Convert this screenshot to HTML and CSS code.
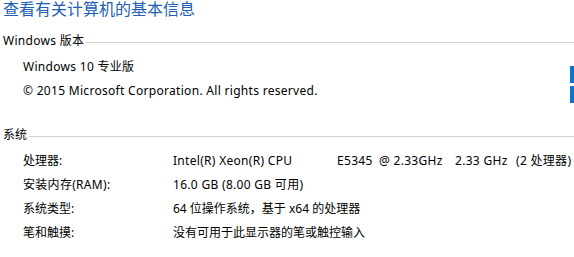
FILE: index.html
```html
<!DOCTYPE html>
<html lang="zh-CN">
<head>
<meta charset="utf-8">
<title>系统</title>
<link rel="stylesheet" href="styles.css">
</head>
<body>
<div class="title">查看有关计算机的基本信息</div>

<div class="section-head first"><span class="head-text">Windows 版本</span><span class="rule"></span></div>
<div class="edition">
  <div class="edition-text">
    <div class="row">Windows 10 专业版</div>
    <div class="row">© 2015 Microsoft Corporation. All rights reserved.</div>
  </div>
  <div class="logo"><span class="bar"></span><span class="bar"></span></div>
</div>

<div class="section-head second"><span class="head-text cjk">系统</span><span class="rule"></span></div>
<div class="props">
  <div class="row"><span class="label cjk">处理器:</span><span class="value"><span class="c1">Intel(R) Xeon(R) CPU</span><span class="c2">E5345</span><span class="c3">@ 2.33GHz</span><span class="c4">2.33 GHz</span><span>(2 处理器)</span></span></div>
  <div class="row"><span class="label">安装内存(RAM):</span><span class="value">16.0 GB (8.00 GB 可用)</span></div>
  <div class="row"><span class="label cjk">系统类型:</span><span class="value cjk">64 位操作系统，基于 x64 的处理器</span></div>
  <div class="row"><span class="label cjk">笔和触摸:</span><span class="value cjk">没有可用于此显示器的笔或触控输入</span></div>
</div>
</body>
</html>
```
FILE: styles.css
```css
html, body {
  margin: 0;
  padding: 0;
  background: #ffffff;
}
body {
  font-family: "Noto Sans", "Noto Sans CJK SC", sans-serif;
  font-size: 12px;
  letter-spacing: 0.3px;
  color: #000000;
  overflow: hidden;
}
.cjk { letter-spacing: 0; }
.title {
  padding-left: 3px;
  font-family: "Noto Sans CJK SC", sans-serif;
  font-size: 16px;
  line-height: 17px;
  height: 16px;
  letter-spacing: 0;
  color: #2060b4;
}
.section-head {
  display: flex;
  align-items: center;
  padding-left: 3px;
  line-height: 24px;
  height: 24px;
}
.section-head.first { margin-top: 13px; }
.section-head.second { margin-top: 20px; }
.head-text { white-space: nowrap; }
.rule {
  flex: 1;
  height: 1px;
  background: #cfcfcf;
  margin-left: 2px;
  margin-top: 2px;
}
.edition {
  display: flex;
  justify-content: space-between;
  height: 48px;
  margin-top: 2px;
}
.edition-text { padding-left: 23px; }
.row {
  line-height: 24px;
  height: 24px;
  white-space: nowrap;
}
.logo {
  display: flex;
  flex-direction: column;
  gap: 3px;
  margin-top: 11px;
  width: 4px;
}
.bar {
  display: block;
  width: 4px;
  height: 19px;
  background: #0a74d1;
}
.bar + .bar { height: 20px; }
.props {
  margin-top: 2px;
  padding-left: 23px;
}
.props .row { display: flex; }
.label {
  width: 150px;
  flex: none;
}
.value { display: flex; }
.c1 { width: 164px; }
.c2 { width: 42px; }
.c3 { width: 76px; }
.c4 { width: 61px; }
```
